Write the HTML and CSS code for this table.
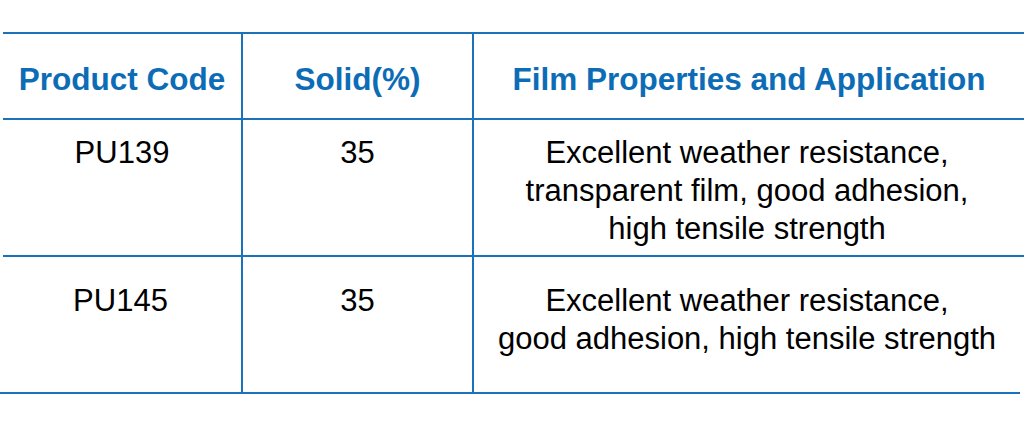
FILE: index.html
```html
<!DOCTYPE html>
<html lang="en">
<head>
<meta charset="utf-8">
<title>Product table</title>
<link rel="stylesheet" href="styles.css">
</head>
<body>
<div class="table">
  <div class="row head">
    <div class="cell c1">Product Code</div>
    <div class="cell c2">Solid(%)</div>
    <div class="cell c3">Film Properties and Application</div>
  </div>
  <div class="row r1">
    <div class="cell c1">PU139</div>
    <div class="cell c2">35</div>
    <div class="cell c3">Excellent weather resistance,<br>transparent film, good adhesion,<br>high tensile strength</div>
  </div>
  <div class="row r2">
    <div class="cell c1">PU145</div>
    <div class="cell c2">35</div>
    <div class="cell c3">Excellent weather resistance,<br>good adhesion, high tensile strength</div>
  </div>
</div>
</body>
</html>
```
FILE: styles.css
```css
html, body {
  margin: 0;
  padding: 0;
  background: #ffffff;
}
body {
  font-family: "Liberation Sans", Arial, sans-serif;
  color: #000000;
}
.table {
  padding-top: 32px;
  width: 1024px;
}
.row {
  display: grid;
  grid-template-columns: 241px 231px 1fr;
  border-bottom: 2px solid #1a72ba;
  box-sizing: border-box;
}
.cell {
  text-align: center;
  font-size: 31px;
  line-height: 37.8px;
  box-sizing: border-box;
}
.c2, .c3 {
  border-left: 2px solid #1a72ba;
}
.c3 {
  padding-right: 4px;
}
.head {
  border-top: 2px solid #1a72ba;
  margin-left: 3px;
  grid-template-columns: 238px 231px 1fr;
  height: 88px;
}
.head .cell {
  font-weight: bold;
  font-size: 31.5px;
  color: #0d6cb6;
  padding-top: 27px;
}
.head .c3 {
  padding-right: 0;
}
.r1 {
  margin-left: 3px;
  grid-template-columns: 238px 231px 1fr;
  height: 137px;
}
.r1 .cell {
  padding-top: 14px;
}
.r2 {
  height: 137px;
  margin-right: 4px;
}
.r2 .cell {
  padding-top: 25px;
}
.r2 .c3 {
  padding-right: 0;
}
```
